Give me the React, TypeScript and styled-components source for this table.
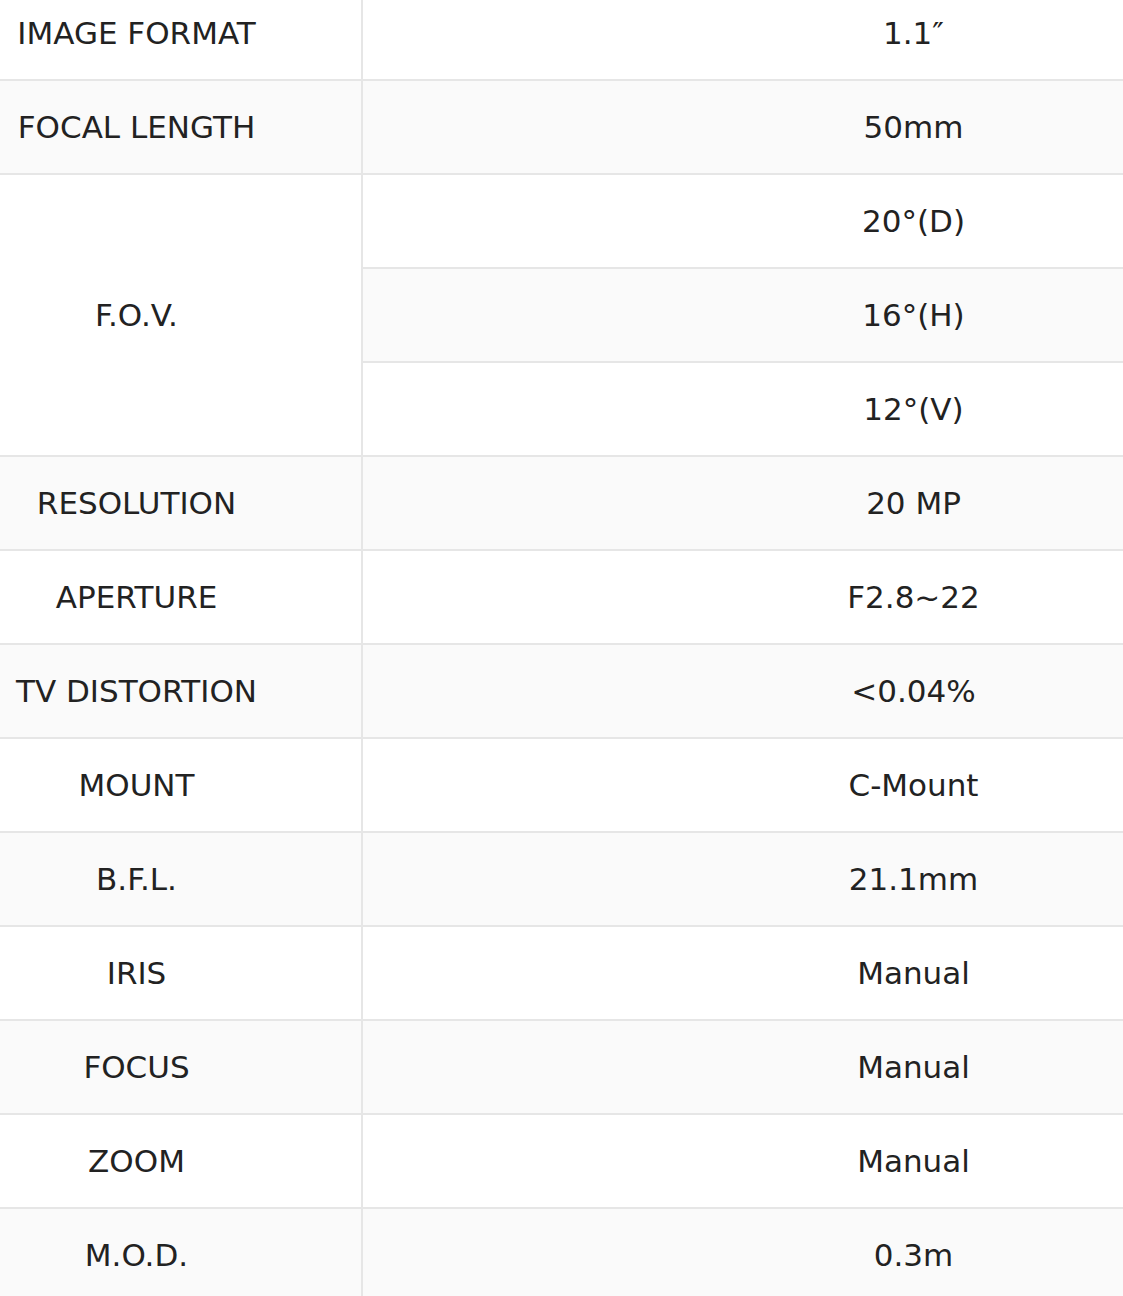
import React from "react";
import styled, { createGlobalStyle } from "styled-components";

const Global = createGlobalStyle`
  html, body { margin: 0; padding: 0; background: #ffffff; }
  body { overflow: hidden; }
`;

const Viewport = styled.div`
  width: 1123px;
  height: 1296px;
  overflow: hidden;
`;

const SpecTable = styled.table`
  border-collapse: collapse;
  table-layout: fixed;
  width: 1556px;
  margin: -15px 0 0 -90px;
  font-family: "DejaVu Sans", Verdana, sans-serif;
  font-size: 31px;
  color: #222222;
`;

const Row = styled.tr`
  background: #ffffff;
  &:nth-child(even) {
    background: #fafafa;
  }
`;

const Cell = styled.td<{ $label?: boolean }>`
  height: 92px;
  padding: 0;
  text-align: center;
  vertical-align: middle;
  border: 2px solid #e6e6e6;
  background: ${(p) => (p.$label ? "#ffffff" : "inherit")};
  white-space: nowrap;
`;

const LabelCol = styled.col`
  width: 451px;
`;

type Spec = { label: string; values: string[] };

const specs: Spec[] = [
  { label: "IMAGE FORMAT", values: ["1.1\u2033"] },
  { label: "FOCAL LENGTH", values: ["50mm"] },
  { label: "F.O.V.", values: ["20°(D)", "16°(H)", "12°(V)"] },
  { label: "RESOLUTION", values: ["20 MP"] },
  { label: "APERTURE", values: ["F2.8~22"] },
  { label: "TV DISTORTION", values: ["<0.04%"] },
  { label: "MOUNT", values: ["C-Mount"] },
  { label: "B.F.L.", values: ["21.1mm"] },
  { label: "IRIS", values: ["Manual"] },
  { label: "FOCUS", values: ["Manual"] },
  { label: "ZOOM", values: ["Manual"] },
  { label: "M.O.D.", values: ["0.3m"] },
];

export default function App() {
  const rows: React.ReactNode[] = [];
  specs.forEach((s) => {
    s.values.forEach((v, i) => {
      rows.push(
        <Row key={`${s.label}-${i}`}>
          {i === 0 &&
            (s.values.length > 1 ? (
              <Cell rowSpan={s.values.length} $label>
                {s.label}
              </Cell>
            ) : (
              <Cell>{s.label}</Cell>
            ))}
          <Cell>{v}</Cell>
        </Row>
      );
    });
  });
  return (
    <>
      <Global />
      <Viewport>
        <SpecTable>
          <colgroup>
            <LabelCol />
            <col />
          </colgroup>
          <tbody>{rows}</tbody>
        </SpecTable>
      </Viewport>
    </>
  );
}
